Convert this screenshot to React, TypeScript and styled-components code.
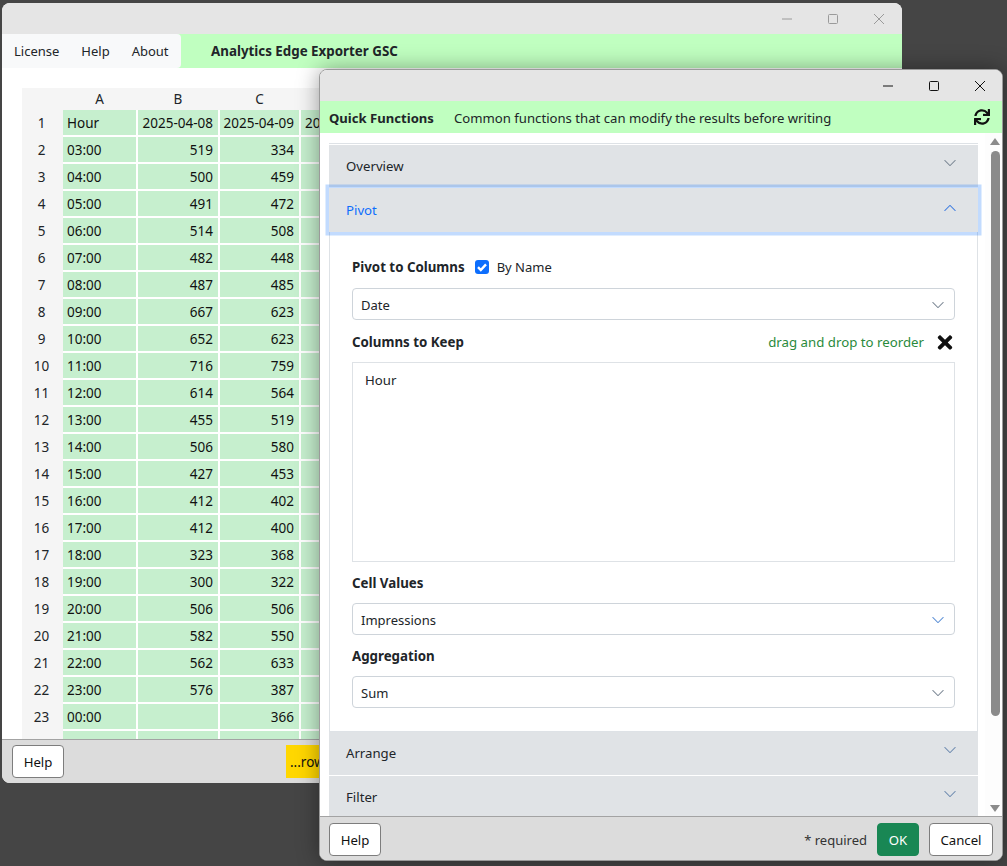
import React from "react";
import styled, { createGlobalStyle } from "styled-components";
import { FaSync, FaTimes } from "react-icons/fa";

const Global = createGlobalStyle`
  html, body { margin: 0; padding: 0; background: #444; }
  body { font-family: "Noto Sans", "Open Sans", sans-serif; font-size: 13.2px; color: #212529; }
`;

const Desktop = styled.div`
  position: relative;
  width: 1007px;
  height: 866px;
  overflow: hidden;
  background: #454545;
`;

const Win = styled.div<{ $x: number; $y: number; $w: number; $h: number; $top?: boolean }>`
  position: absolute;
  left: ${(p) => p.$x}px;
  top: ${(p) => p.$y}px;
  width: ${(p) => p.$w}px;
  height: ${(p) => p.$h}px;
  display: flex;
  flex-direction: column;
  overflow: hidden;
  box-sizing: border-box;
  background: #fff;
  border-radius: 8px;
  border: ${(p) => (p.$top ? "1px solid #9a9a9a" : "0")};
  box-shadow: ${(p) => (p.$top ? "0 0 22px rgba(0,0,0,.38)" : "none")};
`;

const TitleBar = styled.div<{ $h: number; $bleed?: boolean }>`
  height: ${(p) => p.$h}px;
  flex: none;
  background: #e5e5e5;
  display: flex;
  justify-content: flex-end;
  margin-right: ${(p) => (p.$bleed ? "-1px" : "0")};
`;

const Ctl = styled.div<{ $faded?: boolean }>`
  width: 46px;
  display: flex;
  align-items: center;
  justify-content: center;
  color: ${(p) => (p.$faded ? "#9a9a9a" : "#111")};
`;

const Controls = ({ faded }: { faded?: boolean }) => (
  <>
    <Ctl $faded={faded}>
      <svg width="12" height="12" viewBox="0 0 12 12"><path d="M1 6h10" stroke="currentColor" strokeWidth="1" /></svg>
    </Ctl>
    <Ctl $faded={faded}>
      <svg width="12" height="12" viewBox="0 0 12 12"><rect x="1.5" y="1.5" width="9" height="9" rx="1" fill="none" stroke="currentColor" strokeWidth="1" /></svg>
    </Ctl>
    <Ctl $faded={faded}>
      <svg width="12" height="12" viewBox="0 0 12 12"><path d="M1 1l10 10M11 1L1 11" stroke="currentColor" strokeWidth="1" /></svg>
    </Ctl>
  </>
);

const MainBar = styled.div`
  height: 34px;
  flex: none;
  background: #c0ffc0;
  display: flex;
  align-items: stretch;
`;

const Menu = styled.div`
  width: 179px;
  flex: none;
  background: #f8f9fa;
  border-radius: 0 4px 4px 0;
  display: flex;
  align-items: center;
  padding-left: 12px;
  box-sizing: border-box;
  gap: 22px;
`;

const MenuItem = styled.span`
  font-size: 13px;
  color: #212529;
`;

const AppTitle = styled.div`
  margin-left: 30px;
  display: flex;
  align-items: center;
  font-weight: 700;
  font-size: 13.35px;
  color: #212529;
`;

const SheetArea = styled.div`
  flex: 1;
  min-height: 0;
  overflow: hidden;
  padding: 20px 0 0 20px;
`;

const Sheet = styled.div`
  display: grid;
  grid-template-columns: 39px 73px 80px 79px 30px;
  grid-template-rows: 20px;
  grid-auto-rows: 25px;
  column-gap: 2px;
  row-gap: 2px;
  width: 840px;
  background: linear-gradient(#f5f5f5, #f5f5f5) left / 41px 100% no-repeat,
    linear-gradient(#f5f5f5, #f5f5f5) top / 100% 22px no-repeat;
`;

const HeadCell = styled.div`
  display: flex;
  align-items: center;
  justify-content: center;
  font-size: 13.5px;
  color: #212529;
`;

const ColHead = styled(HeadCell)`
  height: 22px;
`;

const DataCell = styled.div<{ $right?: boolean }>`
  background: #c6efce;
  padding: 0 5px 0 4px;
  display: flex;
  align-items: center;
  justify-content: ${(p) => (p.$right ? "flex-end" : "flex-start")};
  font-size: 13.5px;
  color: #111;
  white-space: nowrap;
  overflow: hidden;
`;

const Footer = styled.div`
  height: 44px;
  flex: none;
  box-sizing: border-box;
  background: #dcdcdc;
  border-top: 1px solid #a3a3a3;
  display: flex;
  align-items: center;
  padding: 0 10px;
`;

const Btn = styled.div<{ $w: number }>`
  width: ${(p) => p.$w}px;
  height: 33px;
  box-sizing: border-box;
  display: flex;
  align-items: center;
  justify-content: center;
  background: #fff;
  border: 1px solid #7d7d7d;
  border-radius: 4px;
  font-size: 13.2px;
  color: #111;
`;

const OkBtn = styled(Btn)`
  background: #198754;
  border-color: #198754;
  color: #fff;
`;

const RowsBadge = styled.div`
  margin-left: 222px;
  height: 33px;
  padding: 0 4px;
  background: #ffd700;
  display: flex;
  align-items: center;
  font-size: 13.5px;
  color: #111;
`;

const DialogBar = styled.div`
  height: 32px;
  flex: none;
  background: #c0ffc0;
  display: flex;
  align-items: center;
  padding: 0 12px 0 9px;
`;

const DialogTitle = styled.span`
  font-weight: 700;
  font-size: 13.1px;
  width: 125px;
  padding-top: 1px;
  color: #212529;
`;

const DialogDesc = styled.span`
  flex: 1;
  font-size: 13.15px;
  padding-top: 1px;
  color: #212529;
`;

const ScrollArea = styled.div`
  flex: 1;
  min-height: 0;
  display: flex;
  overflow: hidden;
`;

const Accordion = styled.div`
  width: 649px;
  margin: 10px 7px 0 9px;
  border-top: 1px solid #dee2e6;
  padding-top: 1px;
  height: 800px;
  flex: none;
`;

const AccHead = styled.div<{ $h: number; $open?: boolean; $pb?: number }>`
  height: ${(p) => p.$h}px;
  box-sizing: border-box;
  position: relative;
  z-index: ${(p) => (p.$open ? 1 : 0)};
  background: #e0e3e6;
  display: flex;
  align-items: center;
  justify-content: space-between;
  padding: 0 21px ${(p) => p.$pb ?? 0}px 17px;
  font-size: 13.2px;
  color: ${(p) => (p.$open ? "#0d6efd" : "#212529")};
  border-bottom: ${(p) => (p.$open ? "0" : "1px solid #fff")};
  box-shadow: ${(p) => (p.$open ? "0 0 0 3.5px rgba(13,110,253,.25)" : "none")};
`;

const AccBody = styled.div`
  border: 1px solid #dee2e6;
  border-width: 0 1px 1px;
  padding: 24px 22px 23px;
  height: 500px;
  box-sizing: border-box;
  display: flex;
  flex-direction: column;
`;

const Row = styled.div<{ $mt?: number; $mb?: number }>`
  height: 22px;
  flex: none;
  margin-top: ${(p) => p.$mt ?? 0}px;
  margin-bottom: ${(p) => p.$mb ?? 9}px;
  display: flex;
  align-items: center;
`;

const Label = styled.span`
  font-weight: 700;
  font-size: 13.3px;
  color: #212529;
`;

const Check = styled.span`
  width: 14px;
  height: 14px;
  border-radius: 3px;
  background: #0d6efd;
  margin: 0 8px 0 10px;
  display: flex;
  align-items: center;
  justify-content: center;
`;

const CheckText = styled.span`
  font-size: 13px;
`;

const Hint = styled.span`
  margin-left: auto;
  color: #2a8a3c;
  font-size: 13.25px;
`;

const ClearIcon = styled.span`
  margin-left: 11px;
  width: 20px;
  display: flex;
  justify-content: center;
  color: #111;
`;

const Select = styled.div`
  height: 32px;
  flex: none;
  box-sizing: border-box;
  border: 1px solid #ced4da;
  border-radius: 4px;
  display: flex;
  align-items: center;
  justify-content: space-between;
  padding: 1px 9px 0 8px;
  font-size: 13px;
  color: #212529;
`;

const ListBox = styled.div`
  height: 200px;
  flex: none;
  box-sizing: border-box;
  border: 1px solid #dee2e6;
  padding: 8px 12px;
  font-size: 13.2px;
  color: #212529;
`;

const Track = styled.div`
  width: 18px;
  flex: none;
  background: #fdfdfd;
  display: flex;
  flex-direction: column;
  align-items: center;
  padding: 5px 3px 4px 5px;
  margin-left: auto;
  box-sizing: border-box;
`;

const Thumb = styled.div`
  width: 9px;
  height: 565px;
  flex: none;
  margin: 6px 0 auto;
  background: #8b8b8b;
  border-radius: 5px;
`;

const Arrow = styled.div<{ $down?: boolean }>`
  width: 0;
  height: 0;
  flex: none;
  border-left: 5px solid transparent;
  border-right: 5px solid transparent;
  ${(p) => (p.$down ? "border-top: 7px solid #8b8b8b;" : "border-bottom: 7px solid #8b8b8b;")}
`;

const Spacer = styled.div`
  flex: 1;
`;

const DialogFooter = styled(Footer)`
  gap: 10px;
  padding: 2px 9px 0;
`;

const Required = styled.span`
  font-size: 13px;
  color: #333;
`;

const ChevronSvg = styled.svg<{ $up?: boolean; $lift?: number }>`
  flex: none;
  transform: translateY(${(p) => -(p.$lift ?? 0)}px) rotate(${(p) => (p.$up ? 180 : 0)}deg);
`;

const Chevron = ({ up, color = "#7b8794", lift }: { up?: boolean; color?: string; lift?: number }) => (
  <ChevronSvg width={14} height={14} viewBox="0 0 16 16" $up={up} $lift={lift}>
    <path
      fill={color}
      d="M1.646 4.646a.5.5 0 0 1 .708 0L8 10.293l5.646-5.647a.5.5 0 0 1 .708.708l-6 6a.5.5 0 0 1-.708 0l-6-6a.5.5 0 0 1 0-.708z"
    />
  </ChevronSvg>
);

const rows: [string, string, string][] = [
  ["03:00", "519", "334"], ["04:00", "500", "459"], ["05:00", "491", "472"], ["06:00", "514", "508"],
  ["07:00", "482", "448"], ["08:00", "487", "485"], ["09:00", "667", "623"], ["10:00", "652", "623"],
  ["11:00", "716", "759"], ["12:00", "614", "564"], ["13:00", "455", "519"], ["14:00", "506", "580"],
  ["15:00", "427", "453"], ["16:00", "412", "402"], ["17:00", "412", "400"], ["18:00", "323", "368"],
  ["19:00", "300", "322"], ["20:00", "506", "506"], ["21:00", "582", "550"], ["22:00", "562", "633"],
  ["23:00", "576", "387"], ["00:00", "", "366"], ["", "", ""],
];

export default function App() {
  return (
    <Desktop>
      <Global />
      <Win $x={2} $y={3} $w={900} $h={780}>
        <TitleBar $h={31}><Controls faded /></TitleBar>
        <MainBar>
          <Menu>
            <MenuItem>License</MenuItem>
            <MenuItem>Help</MenuItem>
            <MenuItem>About</MenuItem>
          </Menu>
          <AppTitle>Analytics Edge Exporter GSC</AppTitle>
        </MainBar>
        <SheetArea>
          <Sheet>
            <ColHead />
            <ColHead>A</ColHead>
            <ColHead>B</ColHead>
            <ColHead>C</ColHead>
            <ColHead />
            <HeadCell>1</HeadCell>
            <DataCell>Hour</DataCell>
            <DataCell $right>2025-04-08</DataCell>
            <DataCell $right>2025-04-09</DataCell>
            <DataCell>2025-04-10</DataCell>
            {rows.map((r, i) => (
              <React.Fragment key={i}>
                <HeadCell>{i < 22 ? i + 2 : ""}</HeadCell>
                <DataCell>{r[0]}</DataCell>
                <DataCell $right>{r[1]}</DataCell>
                <DataCell $right>{r[2]}</DataCell>
                <DataCell />
              </React.Fragment>
            ))}
          </Sheet>
        </SheetArea>
        <Footer>
          <Btn $w={52}>Help</Btn>
          <RowsBadge>...rows</RowsBadge>
        </Footer>
      </Win>

      <Win $x={319} $y={69} $w={684} $h={792} $top>
        <TitleBar $h={31} $bleed><Controls /></TitleBar>
        <DialogBar>
          <DialogTitle>Quick Functions</DialogTitle>
          <DialogDesc>Common functions that can modify the results before writing</DialogDesc>
          <FaSync size={16} color="#111" />
        </DialogBar>
        <ScrollArea>
          <Accordion>
            <AccHead $h={43}>Overview<Chevron lift={3} /></AccHead>
            <AccHead $h={44} $open>Pivot<Chevron up color="#3d7be0" lift={2} /></AccHead>
            <AccBody>
              <Row $mb={10}>
                <Label>Pivot to Columns</Label>
                <Check>
                  <svg width="12" height="12" viewBox="0 0 12 12"><path d="M2 6.2l2.8 2.8 5.2-5.6" fill="none" stroke="#fff" strokeWidth="2.4" /></svg>
                </Check>
                <CheckText>By Name</CheckText>
              </Row>
              <Select>Date<Chevron /></Select>
              <Row $mt={11}>
                <Label>Columns to Keep</Label>
                <Hint>drag and drop to reorder</Hint>
                <ClearIcon><FaTimes size={21} /></ClearIcon>
              </Row>
              <ListBox>Hour</ListBox>
              <Row $mt={10}><Label>Cell Values</Label></Row>
              <Select>Impressions<Chevron color="#5b8fd6" /></Select>
              <Row $mt={10}><Label>Aggregation</Label></Row>
              <Select>Sum<Chevron /></Select>
            </AccBody>
            <AccHead $h={44} $pb={2}>Arrange<Chevron color="#6f8bb0" lift={3} /></AccHead>
            <AccHead $h={44} $pb={2}>Filter<Chevron color="#6f8bb0" lift={3} /></AccHead>
          </Accordion>
          <Track>
            <Arrow />
            <Thumb />
            <Arrow $down />
          </Track>
        </ScrollArea>
        <DialogFooter>
          <Btn $w={52}>Help</Btn>
          <Spacer />
          <Required>* required</Required>
          <OkBtn $w={42}>OK</OkBtn>
          <Btn $w={64}>Cancel</Btn>
        </DialogFooter>
      </Win>
    </Desktop>
  );
}
